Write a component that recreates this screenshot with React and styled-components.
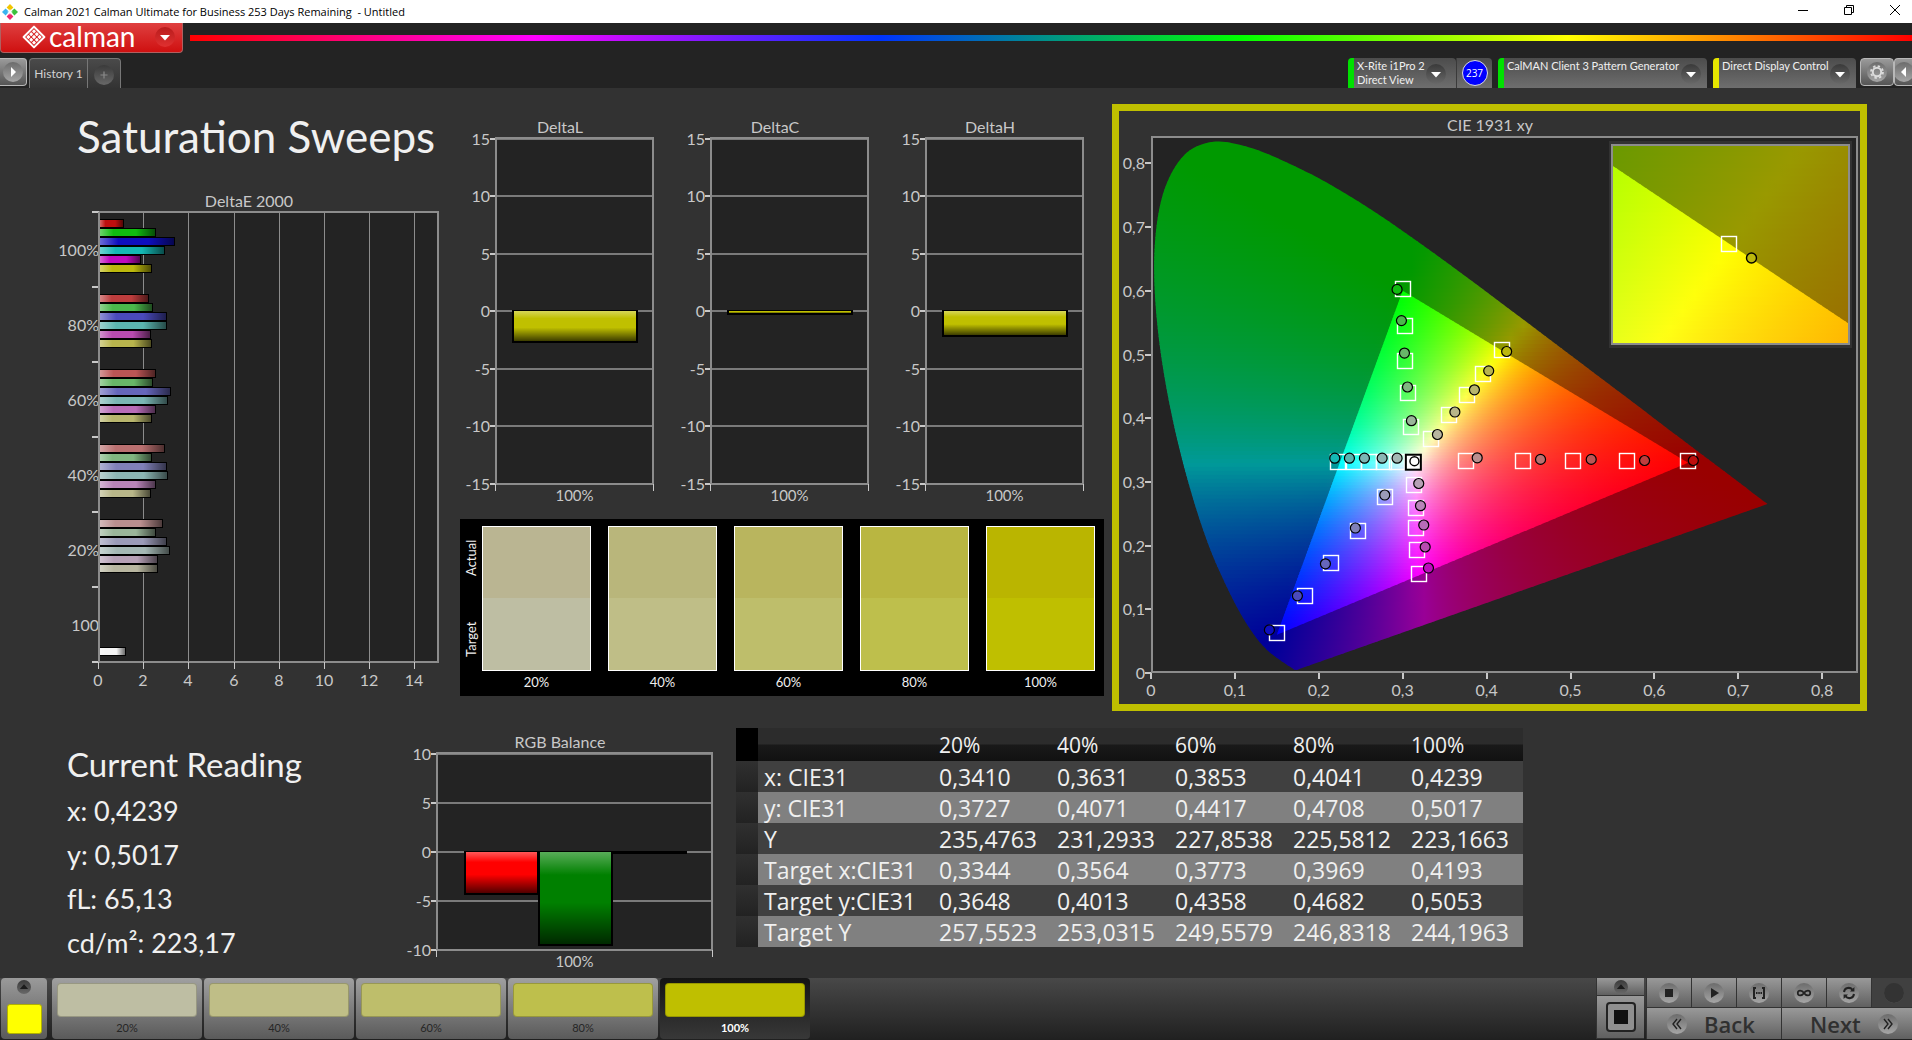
import React from 'react'
import styled, { createGlobalStyle } from 'styled-components'

const GlobalStyle = createGlobalStyle`
  * { box-sizing: border-box; }
  body {
    margin: 0;
    background: #323232;
    font-family: Lato, "Open Sans", sans-serif;
    color: #f0f0f0;
  }
  button { font-family: inherit; color: inherit; padding: 0; margin: 0; border: 0; cursor: pointer; }
  h1, h2, p { margin: 0; font-weight: normal; }
  svg { display: block; flex-shrink: 0; }
  svg text { font-family: Lato, "Open Sans", sans-serif; }
`

/* ---------- data ---------- */

const levels = ['20%', '40%', '60%', '80%', '100%']

const swatches = [
  { actual: '#bab592', target: '#bebea3' },
  { actual: '#b9b67b', target: '#bfbe87' },
  { actual: '#b9b55e', target: '#bebe6b' },
  { actual: '#b9b641', target: '#bebf4c' },
  { actual: '#bab500', target: '#bfbf00' },
]

const readings = ['x: 0,4239', 'y: 0,5017', 'fL: 65,13', 'cd/m²: 223,17']

const tableRows = [
  ['x: CIE31', '0,3410', '0,3631', '0,3853', '0,4041', '0,4239'],
  ['y: CIE31', '0,3727', '0,4071', '0,4417', '0,4708', '0,5017'],
  ['Y', '235,4763', '231,2933', '227,8538', '225,5812', '223,1663'],
  ['Target x:CIE31', '0,3344', '0,3564', '0,3773', '0,3969', '0,4193'],
  ['Target y:CIE31', '0,3648', '0,4013', '0,4358', '0,4682', '0,5053'],
  ['Target Y', '257,5523', '253,0315', '249,5579', '246,8318', '244,1963'],
]

const sweeps = [
  { label: '100%', colors: ['#be0e0e', '#10bb10', '#0e0ebe', '#14b8b4', '#be0abe', '#bcb80c'], values: [1.1, 2.54, 3.35, 2.9, 1.86, 2.36] },
  { label: '80%', colors: ['#bd3d3d', '#4bb84b', '#4a4abb', '#5bb5b0', '#b84bb0', '#b8b44d'], values: [2.2, 2.4, 3.03, 3.03, 2.28, 2.36] },
  { label: '60%', colors: ['#bb5555', '#68b668', '#6666bb', '#7ab6b4', '#b86cb8', '#b8b56d'], values: [2.5, 2.4, 3.2, 3.07, 2.54, 2.36] },
  { label: '40%', colors: ['#ba7070', '#80b680', '#8080b8', '#8cb6b4', '#b984b9', '#b8b689'], values: [2.94, 2.36, 3.03, 3.07, 2.5, 2.28] },
  { label: '20%', colors: ['#ba8f8f', '#9ab59a', '#9b9bb8', '#a4b8b4', '#b6a0b6', '#b8b6a0'], values: [2.82, 2.54, 3.03, 3.16, 2.63, 2.63] },
]

const locus = [
  [0.1741, 0.005], [0.1714, 0.0051], [0.1689, 0.0069], [0.1644, 0.0109], [0.1566, 0.0177], [0.144, 0.0297],
  [0.1355, 0.0399], [0.1241, 0.0578], [0.1096, 0.0868], [0.0913, 0.1327], [0.0687, 0.2007], [0.0454, 0.295],
  [0.0235, 0.4127], [0.0082, 0.5384], [0.0039, 0.6548], [0.0139, 0.7502], [0.0389, 0.812], [0.0743, 0.8338],
  [0.1142, 0.8262], [0.1547, 0.8059], [0.1929, 0.7816], [0.2296, 0.7543], [0.2658, 0.7243], [0.3016, 0.6923],
  [0.3373, 0.6589], [0.3731, 0.6245], [0.4087, 0.5896], [0.4441, 0.5547], [0.4788, 0.5202], [0.5125, 0.4866],
  [0.5448, 0.4544], [0.5752, 0.4242], [0.6029, 0.3965], [0.627, 0.3725], [0.6482, 0.3514], [0.6658, 0.334],
  [0.6801, 0.3197], [0.7006, 0.2993], [0.714, 0.2859], [0.726, 0.274], [0.7347, 0.2653],
]

const gamut = [[0.64, 0.33], [0.3, 0.6], [0.15, 0.06]]

// one entry per hue, 100% first
const targets = [
  [[0.6396, 0.3328], [0.5668, 0.3328], [0.5028, 0.3328], [0.4428, 0.3328], [0.376, 0.3328]],
  [[0.3, 0.6022], [0.3025, 0.545], [0.3033, 0.4905], [0.3069, 0.44], [0.3093, 0.386]],
  [[0.15, 0.0628], [0.1837, 0.1212], [0.215, 0.172], [0.2469, 0.2229], [0.2786, 0.2763]],
  [[0.2234, 0.3309], [0.242, 0.3309], [0.2595, 0.3309], [0.2779, 0.3309], [0.2934, 0.3309]],
  [[0.3191, 0.1559], [0.3176, 0.1931], [0.3156, 0.2279], [0.3156, 0.2583], [0.314, 0.2956]],
  [[0.4183, 0.5068], [0.3955, 0.4694], [0.3763, 0.4371], [0.3549, 0.4045], [0.3342, 0.3675]],
]

const measured = [
  [[0.6464, 0.3336], [0.5883, 0.3336], [0.5247, 0.3353], [0.4643, 0.3353], [0.3888, 0.3378]],
  [[0.2933, 0.6022], [0.2985, 0.5532], [0.3021, 0.5023], [0.3057, 0.449], [0.3104, 0.3961]],
  [[0.1411, 0.0677], [0.1745, 0.1212], [0.2079, 0.1714], [0.2436, 0.2276], [0.2786, 0.2794]],
  [[0.219, 0.3372], [0.2365, 0.3372], [0.2544, 0.3372], [0.2755, 0.3372], [0.2933, 0.3372]],
  [[0.3307, 0.1648], [0.3268, 0.1978], [0.3251, 0.2323], [0.3212, 0.2626], [0.3191, 0.2975]],
  [[0.4239, 0.5047], [0.4025, 0.4743], [0.3855, 0.4446], [0.3622, 0.4097], [0.3414, 0.3744]],
]

/* ---------- charts ---------- */

const GRID = '#8c8c8c'
const TEXT = '#c8c8c8'

function DeltaEChart() {
  const left = 49, right = 388, top = 22, bottom = 472
  const sx = v => Math.round(left - 1 + v * 22.6)
  const group = (bottom - top) / 6
  const bar = (key, x, y, w, fill) => (
    <g key={key}>
      <rect x={x} y={y} width={w} height="8" fill={fill} stroke="#000" />
      <rect x={x} y={y} width={w} height="8" fill="url(#barShade)" stroke="#000" />
    </g>
  )
  return (
    <svg width="400" height="505" viewBox="0 0 400 505" role="img" aria-label="DeltaE 2000">
      <defs>
        <linearGradient id="barShade">
          <stop offset="0" stopColor="#fff" stopOpacity=".4" />
          <stop offset=".25" stopColor="#fff" stopOpacity="0" />
          <stop offset=".65" stopColor="#000" stopOpacity="0" />
          <stop offset="1" stopColor="#000" stopOpacity=".6" />
        </linearGradient>
      </defs>
      <text x="199" y="17" fontSize="16" fill={TEXT} textAnchor="middle">DeltaE 2000</text>
      <rect x={left} y={top} width={right - left} height={bottom - top} fill="#232323" stroke={GRID} strokeWidth="2" />
      {[0, 2, 4, 6, 8, 10, 12, 14].map(v => (
        <g key={v}>
          <rect x={sx(v)} y={top} width="1" height={bottom - top} fill={GRID} />
          <rect x={sx(v)} y={bottom} width="1" height="7" fill={TEXT} />
          <text x={sx(v)} y="496" fontSize="16" fill={TEXT} textAnchor="middle">{v}</text>
        </g>
      ))}
      {[0, 1, 2, 3, 4, 5, 6].map(i => (
        <rect key={i} x={left - 7} y={Math.round(top + i * group) - 1} width="7" height="2" fill={TEXT} />
      ))}
      {sweeps.map((s, i) => (
        <g key={s.label}>
          {s.values.map((v, j) => bar(j, left + 0.5, Math.round(top + 7 + i * group + j * 9) + 0.5, Math.round(v * 22.6) - 1, s.colors[j]))}
          <text x="49" y={top + 44 + i * group} fontSize="16" fill={TEXT} textAnchor="end">{s.label}</text>
        </g>
      ))}
      {bar('white', left + 0.5, 457.5, 26, '#f4f4f4')}
      <text x="49" y="441" fontSize="16" fill={TEXT} textAnchor="end">100</text>
      <rect x={left - 1} y={top} width="2" height={bottom - top} fill={GRID} />
    </svg>
  )
}

function LevelChart({ title, width, height, plot, titleX, max, step, bars }) {
  const { left, right, top, bottom } = plot
  const sy = v => Math.floor(top + 1 + ((max - v) / (2 * max)) * (bottom - top - 1))
  const ticks = []
  for (let v = max; v >= -max; v -= step) ticks.push(v)
  return (
    <svg width={width} height={height} viewBox={`0 0 ${width} ${height}`} role="img" aria-label={title}>
      <defs>
        <linearGradient id="columnShade" x1="0" y1="0" x2="0" y2="1">
          <stop offset="0" stopColor="#fff" stopOpacity=".35" />
          <stop offset=".25" stopColor="#fff" stopOpacity="0" />
          <stop offset=".55" stopColor="#000" stopOpacity="0" />
          <stop offset="1" stopColor="#000" stopOpacity=".68" />
        </linearGradient>
      </defs>
      <text x={titleX} y={top - 5} fontSize="16" fill={TEXT} textAnchor="middle">{title}</text>
      <rect x={left} y={top} width={right - left} height={bottom - top} fill="#232323" />
      {ticks.map(v => (
        <g key={v}>
          <rect x={left} y={sy(v) - 1} width={right - left} height="2" fill="#7a7a7a" />
          <rect x={left - 6} y={sy(v) - 1} width="6" height="2" fill={TEXT} />
          <text x={left - 6} y={sy(v) + 6} fontSize="16" fill={TEXT} textAnchor="end">{v}</text>
        </g>
      ))}
      <rect x={left} y={top} width={right - left} height={bottom - top} fill="none" stroke={GRID} strokeWidth="2" />
      <rect x={left - 1} y={bottom} width="1" height="7" fill={TEXT} />
      <rect x={right} y={bottom} width="1" height="7" fill={TEXT} />
      {bars.map(b => (
        <g key={b.x}>
          <rect x={b.x} y={sy(0)} width={b.width} height={b.height} fill={b.fill} stroke="#000" strokeWidth="2" />
          <rect x={b.x + 1} y={sy(0)} width={b.width - 2} height={Math.max(0, b.height - 1)} fill={b.fill} />
          <rect x={b.x + 1} y={sy(0)} width={b.width - 2} height={Math.max(0, b.height - 1)} fill="url(#columnShade)" />
        </g>
      ))}
      <text x={(left + right) / 2} y={bottom + 17} fontSize="15" fill={TEXT} textAnchor="middle">100%</text>
    </svg>
  )
}

// linear RGB of a chromaticity, scaled so the largest channel is full
function chroma(x, y, k) {
  const z = 1 - x - y
  const rgb = [
    3.2406 * x - 1.5372 * y - 0.4986 * z,
    -0.9689 * x + 1.8758 * y + 0.0415 * z,
    0.0557 * x - 0.204 * y + 1.057 * z,
  ].map(c => Math.max(0, c))
  const m = Math.max(...rgb)
  return `rgb(${rgb.map(c => Math.round((c / m) * 255 * k)).join(',')})`
}

// smooth curve through the points, closed by a straight line
function curve(p) {
  let d = `M${p[0][0]} ${p[0][1]}`
  for (let i = 0; i < p.length - 1; i++) {
    const a = p[i - 1] || p[i], b = p[i], c = p[i + 1], e = p[i + 2] || c
    d += `C${b[0] + (c[0] - a[0]) / 6} ${b[1] + (c[1] - a[1]) / 6} ${c[0] - (e[0] - b[0]) / 6} ${c[1] - (e[1] - b[1]) / 6} ${c[0]} ${c[1]}`
  }
  return d + 'Z'
}

// fills an area with horizontal strips, each one a gradient across x
function ChromaField({ id, x0, x1, y0, y1, sx, sy, rows, stops, k }) {
  const strips = []
  const px = sx(x0), w = sx(x1) - sx(x0)
  const top = sy(y1), h = (sy(y0) - sy(y1)) / rows
  for (let r = 0; r < rows; r++) {
    const y = y1 - ((r + 0.5) / rows) * (y1 - y0)
    const colors = []
    for (let s = 0; s <= stops; s++) {
      colors.push(<stop key={s} offset={s / stops} stopColor={chroma(x0 + (s / stops) * (x1 - x0), y, k)} />)
    }
    strips.push(
      <g key={r}>
        <linearGradient id={`${id}${r}`}>{colors}</linearGradient>
        <rect x={px} y={top + r * h} width={w} height={h + 1} fill={`url(#${id}${r})`} />
      </g>
    )
  }
  return <>{strips}</>
}

function CieChart() {
  const left = 33, right = 738, top = 26, bottom = 561
  const sx = v => left - 1 + v * 839
  const sy = v => bottom + 1 - v * 637
  // magnified view around the selected target
  const zoom = { x: 492, y: 33, w: 239, h: 201 }
  const zx = v => zoom.x + zoom.w / 2 + (v - 0.4193) * (zoom.w / 0.05)
  const zy = v => zoom.y + zoom.h / 2 - (v - 0.5053) * (zoom.h / 0.05)
  const axis = [0, 1, 2, 3, 4, 5, 6, 7, 8]
  const name = i => (i === 0 ? '0' : `0,${i}`)
  return (
    <CieSvg viewBox="0 0 741 593" role="img" aria-label="CIE 1931 xy">
      <defs>
        <clipPath id="locus"><path d={curve(locus.map(([x, y]) => [sx(x), sy(y)]))} /></clipPath>
        <clipPath id="gamut"><polygon points={gamut.map(([x, y]) => `${sx(x)},${sy(y)}`).join(' ')} /></clipPath>
        <clipPath id="zoomBox"><rect x={zoom.x} y={zoom.y} width={zoom.w} height={zoom.h} /></clipPath>
        <clipPath id="zoomGamut">
          <polygon points={gamut.map(([x, y]) => `${zx(x)},${zy(y)}`).join(' ')} />
        </clipPath>
      </defs>
      <text x="371" y="20" fontSize="16" fill={TEXT} textAnchor="middle">CIE 1931 xy</text>
      <rect x={left} y={top} width={right - left} height={bottom - top} fill="#232323" stroke={GRID} strokeWidth="2" />
      <g clipPath="url(#locus)">
        <ChromaField id="o" x0={0} x1={0.74} y0={0} y1={0.84} sx={sx} sy={sy} rows={135} stops={50} k={0.6} />
      </g>
      <g clipPath="url(#gamut)">
        <ChromaField id="i" x0={0.15} x1={0.64} y0={0.06} y1={0.6} sx={sx} sy={sy} rows={115} stops={50} k={1} />
      </g>
      {axis.map(i => (
        <g key={i}>
          <rect x={Math.round(sx(i / 10)) - 1} y={bottom + 1} width="2" height="6" fill={TEXT} />
          <text x={sx(i / 10)} y="585" fontSize="16" fill={TEXT} textAnchor="middle">{name(i)}</text>
          <rect x={left - 7} y={Math.round(sy(i / 10)) - 1} width="6" height="2" fill={TEXT} />
          <text x={left - 7} y={sy(i / 10) + 6} fontSize="16" fill={TEXT} textAnchor="end">{name(i)}</text>
        </g>
      ))}
      {targets.flat().map(([x, y], i) => (
        <rect key={i} x={Math.round(sx(x)) - 7.5} y={Math.round(sy(y)) - 7.5} width="15" height="15" fill="none" stroke="#fff" strokeWidth="1.4" />
      ))}
      {measured.map((hue, h) => hue.map(([x, y], i) => (
        <circle key={`${h}-${i}`} cx={sx(x)} cy={sy(y)} r="5" fill={sweeps[i].colors[h]} stroke="#000" strokeWidth="1.2" />
      )))}
      <rect x={sx(0.3127) - 7.5} y={sy(0.3309) - 7.5} width="15" height="15" fill="#fff" stroke="#000" strokeWidth="2" />
      <circle cx={sx(0.314)} cy={sy(0.3325)} r="4.5" fill="#fff" stroke="#000" strokeWidth="1.4" />

      <rect x={zoom.x - 2} y={zoom.y - 3} width={zoom.w + 4} height={zoom.h + 6} fill="#323232" />
      <g clipPath="url(#zoomBox)">
        <ChromaField id="zo" x0={0.3943} x1={0.4443} y0={0.4803} y1={0.5303} sx={zx} sy={zy} rows={50} stops={20} k={0.6} />
        <g clipPath="url(#zoomGamut)">
          <ChromaField id="zi" x0={0.3943} x1={0.4443} y0={0.4803} y1={0.5303} sx={zx} sy={zy} rows={50} stops={20} k={1} />
        </g>
      </g>
      <rect x={zoom.x + 1} y={zoom.y + 1} width={zoom.w - 2} height={zoom.h - 2} fill="none" stroke={GRID} strokeWidth="2" />
      <rect x={zx(0.4193) - 9} y={zy(0.5053) - 8} width="15" height="15" fill="none" stroke="#fff" strokeWidth="1.4" />
      <circle cx={zx(0.4239) - 1} cy={zy(0.5017) - 1} r="5" fill="#bcb80c" stroke="#000" strokeWidth="1.4" />
    </CieSvg>
  )
}

/* ---------- icons ---------- */

// round dimple that most of the controls carry, with a glyph in the middle
function Dimple({ size = 20, tone = 'light', children }) {
  const fill = { light: 'url(#dimpleLight)', dark: 'url(#dimpleDark)', red: 'url(#dimpleRed)' }[tone]
  return (
    <svg width={size} height={size} viewBox="0 0 20 20" aria-hidden="true">
      <defs>
        <linearGradient id="dimpleLight" x1="0" y1="0" x2="0" y2="1">
          <stop offset="0" stopColor="#6c6c6c" /><stop offset="1" stopColor="#a6a6a6" />
        </linearGradient>
        <linearGradient id="dimpleDark" x1="0" y1="0" x2="0" y2="1">
          <stop offset="0" stopColor="#3a3a3a" /><stop offset="1" stopColor="#686868" />
        </linearGradient>
        <linearGradient id="dimpleRed" x1="0" y1="0" x2="0" y2="1">
          <stop offset="0" stopColor="#b81c1c" /><stop offset="1" stopColor="#e03030" />
        </linearGradient>
      </defs>
      <circle cx="10" cy="10" r="10" fill={fill} />
      {children}
    </svg>
  )
}

const Down = () => <path d="M5 8h10l-5 5.5z" fill="#fff" />
const Up = () => <path d="M4 13h12l-6-7z" fill="#1c1c1c" />

const AppIcon = () => (
  <svg width="16" height="16" viewBox="0 0 16 16" aria-hidden="true">
    <path d="M8 0l3.4 3.4L8 6.8 4.6 3.4z" fill="#f2c500" />
    <path d="M3.6 4.4L7 7.8l-3.4 3.6L0 8z" fill="#3bb4f0" />
    <path d="M12.4 4.4L16 8l-3.6 3.4L9 7.8z" fill="#3cc13c" />
    <path d="M8 8.9l3.4 3.5L8 16l-3.4-3.6z" fill="#f0286e" />
    <path d="M8 5l2.8 3L8 11 5.2 8z" fill="#fff" opacity=".5" />
  </svg>
)

const LogoMark = () => (
  <svg width="24" height="24" viewBox="0 0 24 24" aria-hidden="true">
    <path d="M12 1.6L22.4 12 12 22.4 1.6 12z" fill="none" stroke="#fff" strokeWidth="2" strokeLinejoin="round" />
    {[[12, 6.4], [9.2, 9.2], [14.8, 9.2], [6.4, 12], [12, 12], [17.6, 12], [9.2, 14.8], [14.8, 14.8], [12, 17.6]].map(([x, y]) => (
      <rect key={`${x}-${y}`} x={x - 1.5} y={y - 1.5} width="3" height="3" rx=".6" fill="#fff" transform={`rotate(45 ${x} ${y})`} />
    ))}
  </svg>
)

const Gear = () => (
  <g fill="none" stroke="#dcdcdc">
    <circle cx="10" cy="10" r="4.2" strokeWidth="2" />
    <circle cx="10" cy="10" r="6" strokeWidth="1.8" strokeDasharray="2.4 2.31" />
  </g>
)

/* ---------- page ---------- */

export default function App() {
  return (
    <>
      <GlobalStyle />
      <Page>
        <TitleBar>
          <AppIcon />
          <TitleText>Calman 2021 Calman Ultimate for Business 253 Days Remaining&nbsp; - Untitled</TitleText>
          <WindowButton aria-label="Minimize">
            <svg width="12" height="12" viewBox="0 0 12 12"><path d="M1 6.5h10" stroke="#000" /></svg>
          </WindowButton>
          <WindowButton aria-label="Restore">
            <svg width="12" height="12" viewBox="0 0 12 12"><path d="M1.5 3.5h7v7h-7zM3.5 3.5v-2h7v7h-2" fill="none" stroke="#000" /></svg>
          </WindowButton>
          <WindowButton aria-label="Close">
            <svg width="12" height="12" viewBox="0 0 12 12"><path d="M1 1l10 10M11 1L1 11" stroke="#000" /></svg>
          </WindowButton>
        </TitleBar>

        <Header>
          <LogoButton>
            <LogoMark />
            <LogoText>calman</LogoText>
            <Dimple tone="red"><Down /></Dimple>
          </LogoButton>
          <Spectrum />
        </Header>

        <TabRow>
          <SquareButton $side="left" aria-label="Show panel">
            <Dimple><path d="M8 5l5 5-5 5z" fill="#fff" /></Dimple>
          </SquareButton>
          <HistoryTab>History 1</HistoryTab>
          <AddTab aria-label="Add tab">
            <Dimple tone="dark"><path d="M10 6.5v7M6.5 10h7" stroke="#8a8a8a" strokeWidth="1.2" /></Dimple>
          </AddTab>
          <Spacer />
          <DeviceTab $bar="#00e000" $width="108px" $pad="10px">
            <DeviceName>X-Rite i1Pro 2<br />Direct View</DeviceName>
            <Dimple tone="dark"><Down /></Dimple>
          </DeviceTab>
          <CountTab aria-label="Readings"><Count>237</Count></CountTab>
          <DeviceTab $bar="#00e000" $width="209px" $gap="6px">
            <DeviceName>CalMAN Client 3 Pattern Generator</DeviceName>
            <Dimple tone="dark"><Down /></Dimple>
          </DeviceTab>
          <DeviceTab $bar="#e6e600" $width="143px" $gap="6px">
            <DeviceName>Direct Display Control</DeviceName>
            <Dimple tone="dark"><Down /></Dimple>
          </DeviceTab>
          <SquareButton $wide aria-label="Settings"><Dimple><Gear /></Dimple></SquareButton>
          <SquareButton $side="right" aria-label="Collapse">
            <Dimple><path d="M12 5l-5 5 5 5z" fill="#fff" /></Dimple>
          </SquareButton>
        </TabRow>

        <Content>
          <TopRow>
            <SweepColumn>
              <PageTitle>Saturation Sweeps</PageTitle>
              <DeltaEChart />
            </SweepColumn>
            <MiddleColumn>
              <DeltaRow>
                {[['DeltaL', 31], ['DeltaC', 3], ['DeltaH', 25]].map(([title, h]) => (
                  <LevelChart
                    key={title}
                    title={title}
                    width={215}
                    height={400}
                    plot={{ left: 36, right: 193, top: 28, bottom: 374 }}
                    titleX={100}
                    max={15}
                    step={5}
                    bars={[{ x: 53, width: 124, height: h, fill: '#c0c000' }]}
                  />
                ))}
              </DeltaRow>
              <SwatchPanel>
                <SwatchSide><span>Target</span><span>Actual</span></SwatchSide>
                {swatches.map((s, i) => (
                  <SwatchItem key={levels[i]}>
                    <SwatchBox $actual={s.actual} $target={s.target} />
                    {levels[i]}
                  </SwatchItem>
                ))}
              </SwatchPanel>
            </MiddleColumn>
            <CiePanel><CieChart /></CiePanel>
          </TopRow>

          <BottomRow>
            <Reading>
              <h2>Current Reading</h2>
              {readings.map(r => <p key={r}>{r}</p>)}
            </Reading>
            <LevelChart
              title="RGB Balance"
              width={336}
              height={250}
              plot={{ left: 37, right: 312, top: 25, bottom: 222 }}
              titleX={160}
              max={10}
              step={5}
              bars={[
                { x: 65, width: 73, height: 42, fill: '#ff0000' },
                { x: 139, width: 73, height: 93, fill: '#008000' },
                { x: 213, width: 73, height: 1, fill: '#000' },
              ]}
            />
            <DataTable>
              <thead>
                <tr>
                  <Marker as="td" />
                  <td />
                  {levels.map(l => <th key={l} scope="col">{l}</th>)}
                </tr>
              </thead>
              <tbody>
                {tableRows.map(([name, ...cells]) => (
                  <tr key={name}>
                    <Marker />
                    <th scope="row">{name}</th>
                    {cells.map(c => <td key={c}>{c}</td>)}
                  </tr>
                ))}
              </tbody>
            </DataTable>
          </BottomRow>
        </Content>

        <Footer>
          <ColorButton aria-label="Pattern color">
            <Dimple size={14} tone="dark"><Up /></Dimple>
            <ColorChip />
          </ColorButton>
          {levels.map((l, i) => (
            <LevelButton key={l} $active={i === 4}>
              <LevelSwatch $color={swatches[i].target} />
              {l}
            </LevelButton>
          ))}
          <Spacer />
          <StopColumn>
            <PanelButton $height="18px" aria-label="Expand">
              <Dimple size={14} tone="dark"><Up /></Dimple>
            </PanelButton>
            <PanelButton $height="43px" aria-label="Pattern">
              <svg width="32" height="32" viewBox="0 0 32 32">
                <rect x="2" y="2" width="28" height="28" rx="3" fill="#8f8f8f" stroke="#222" strokeWidth="2" />
                <rect x="9" y="9" width="14" height="14" fill="#111" />
              </svg>
            </PanelButton>
          </StopColumn>
          <Transport>
            <PanelButton $height="30px" aria-label="Stop">
              <Dimple><path d="M6 6h8v8H6z" fill="#222" /></Dimple>
            </PanelButton>
            <PanelButton $height="30px" aria-label="Play">
              <Dimple><path d="M7 5l8 5-8 5z" fill="#222" /></Dimple>
            </PanelButton>
            <PanelButton $height="30px" aria-label="Read series">
              <Dimple>
                <path d="M7 5H5v10h2M13 5h2v10h-2" fill="none" stroke="#222" strokeWidth="2" />
                <path d="M7 10h1.500M9.300 10h1.500M11.500 10H13" stroke="#222" strokeWidth="2" />
              </Dimple>
            </PanelButton>
            <PanelButton $height="30px" aria-label="Read continuously">
              <Dimple>
                <path d="M10 10C8 7 3.800 6.600 3.800 10S8 13 10 10c2-3 6.200-3.400 6.200 0S12 13 10 10z" fill="none" stroke="#222" strokeWidth="1.800" />
              </Dimple>
            </PanelButton>
            <PanelButton $height="30px" aria-label="Refresh">
              <Dimple>
                <path d="M5 9c.6-4.600 6-5.200 8.400-2.400M15 11c-.6 4.600-6 5.200-8.400 2.400" fill="none" stroke="#222" strokeWidth="2" />
                <path d="M15.400 4v4.600H11zM4.600 16v-4.600H9z" fill="#222" />
              </Dimple>
            </PanelButton>
            <PanelButton $height="30px" $off disabled aria-label="Record">
              <Dimple tone="dark"><circle cx="10" cy="10" r="10" fill="#333" /></Dimple>
            </PanelButton>
            <StepButton $pad="20px">
              <Dimple><path d="M10 5l-4 5 4 5M14 5l-4 5 4 5" fill="none" stroke="#222" strokeWidth="1.400" /></Dimple>
              Back
            </StepButton>
            <StepButton $pad="28px">
              Next
              <Dimple><path d="M6 5l4 5-4 5M10 5l4 5-4 5" fill="none" stroke="#222" strokeWidth="1.400" /></Dimple>
            </StepButton>
          </Transport>
        </Footer>
      </Page>
    </>
  )
}

const Page = styled.div`
  min-height: 100vh;
  display: flex;
  flex-direction: column;
`

const TitleBar = styled.div`
  display: flex;
  align-items: center;
  height: 23px;
  padding-left: 2px;
  background: #fff;
  color: #000;
`
const TitleText = styled.span`
  flex: 1;
  margin-left: 6px;
  font: 11px "Open Sans", "Noto Sans", sans-serif;
`
const WindowButton = styled.button`
  display: flex;
  align-items: center;
  justify-content: center;
  width: 46px;
  height: 20px;
  align-self: flex-start;
  background: #fff;
  &:last-child { width: 34px; margin-left: 6px; }
`

const Header = styled.header`
  display: flex;
  gap: 7px;
  height: 35px;
  background: #232323;
`
const LogoButton = styled.button`
  display: flex;
  align-items: center;
  width: 183px;
  height: 30px;
  padding: 0 7px 2px 21px;
  background: linear-gradient(#df4040, #cf1010);
  border: 1px solid #b06060;
  border-top: 0;
  border-radius: 0 0 4px 4px;
`
const LogoText = styled.span`
  flex: 1;
  margin-left: 3px;
  padding-bottom: 2px;
  text-align: left;
  font-size: 28px;
  line-height: 26px;
  color: #fff;
`
const Spectrum = styled.div`
  flex: 1;
  height: 6px;
  margin-top: 12px;
  background: linear-gradient(90deg, #f00, #f0f 20%, #0032ff 40%, #0f0 61%, #ff0 80%, #f00);
`

const TabRow = styled.nav`
  display: flex;
  height: 30px;
  background: #232323;
`
const Spacer = styled.div`
  flex: 1;
`
const SquareButton = styled.button`
  display: flex;
  align-items: center;
  justify-content: center;
  width: ${p => (p.$wide ? '34px' : p.$side === 'left' ? '27px' : '18px')};
  height: 28px;
  margin-left: ${p => (p.$wide ? '4px' : '0')};
  overflow: hidden;
  background: linear-gradient(#9a9a9a, #555);
  border: 1px solid #b8b8b8;
  border-left-width: ${p => (p.$side === 'left' ? '0' : '1px')};
  border-right-width: ${p => (p.$side === 'right' ? '0' : '1px')};
  border-radius: ${p => (p.$side === 'left' ? '0 4px 4px 0' : p.$side === 'right' ? '4px 0 0 4px' : '4px')};
`
const HistoryTab = styled.button`
  width: 59px;
  margin-left: 2px;
  font-size: 12px;
  color: #d2d2d2;
  background: linear-gradient(#4a4a4a, #333);
  border: 1px solid #777;
  border-bottom: 0;
  border-radius: 4px 0 0 0;
`
const AddTab = styled.button`
  display: flex;
  align-items: center;
  justify-content: center;
  width: 33px;
  padding-top: 2px;
  background: linear-gradient(#4a4a4a, #333);
  border: 1px solid #777;
  border-width: 1px 1px 0 0;
  border-radius: 0 4px 0 0;
`
const DeviceTab = styled.button`
  display: flex;
  justify-content: space-between;
  width: ${p => p.$width};
  margin-left: ${p => p.$gap || '0'};
  padding: 0 ${p => p.$pad || '6px'} 0 3px;
  background: linear-gradient(#4c4c4c, #6e6e6e);
  border-left: 6px solid ${p => p.$bar};
  border-radius: 4px 4px 0 0;
  svg { margin-top: 6px; }
`
const DeviceName = styled.span`
  padding-top: 1px;
  text-align: left;
  white-space: nowrap;
  font-size: 11px;
  line-height: 14px;
`
const CountTab = styled.button`
  display: flex;
  align-items: center;
  justify-content: center;
  width: 36px;
  background: linear-gradient(#4c4c4c, #6e6e6e);
  border-left: 1px solid #3a3a3a;
  border-radius: 0 4px 0 0;
`
const Count = styled.span`
  width: 26px;
  height: 26px;
  border: 1px solid #ddd;
  border-radius: 50%;
  background: #00f;
  color: #fff;
  font: 10px "Open Sans", sans-serif;
  line-height: 24px;
`

const Content = styled.main`
  flex: 1;
  background: #323232;
`
const TopRow = styled.section`
  display: grid;
  grid-template-columns: 460px 645px 1fr;
  padding: 16px 45px 0 0;
`
const SweepColumn = styled.div`
  padding-left: 50px;
`
const PageTitle = styled.h1`
  height: 86px;
  padding: 4px 0 0 27px;
  font-size: 44px;
  line-height: 56px;
`
const MiddleColumn = styled.div`
  padding-top: 6px;
`
const DeltaRow = styled.div`
  display: flex;
`
const SwatchPanel = styled.div`
  display: flex;
  gap: 17px;
  width: 644px;
  height: 177px;
  margin-top: 9px;
  padding: 7px 9px 0 0;
  background: #000;
`
const SwatchSide = styled.div`
  display: flex;
  justify-content: space-between;
  width: 22px;
  height: 145px;
  margin-right: -17px;
  padding: 14px 0;
  writing-mode: vertical-rl;
  transform: rotate(180deg);
  font-size: 13px;
  line-height: 22px;
`
const SwatchItem = styled.div`
  flex: 1;
  font-size: 13px;
  line-height: 22px;
  text-align: center;
`
const SwatchBox = styled.div`
  height: 145px;
  border: 1px solid #fff;
  background: linear-gradient(${p => p.$actual} 50%, ${p => p.$target} 50%);
`
const CiePanel = styled.div`
  margin-left: 7px;
  border: 7px solid #bfbf00;
  align-self: start;
`
const CieSvg = styled.svg`
  width: 100%;
  height: auto;
`

const BottomRow = styled.section`
  display: flex;
  align-items: flex-start;
  padding-top: 17px;
`
const Reading = styled.div`
  width: 400px;
  padding: 16px 0 0 67px;
  font-size: 27px;
  line-height: 44px;
  h2 {
    font-size: 33px;
    line-height: 40px;
    margin-bottom: 5px;
  }
`
const DataTable = styled.table`
  border-collapse: collapse;
  table-layout: fixed;
  width: 785px;
  font: 23px "Open Sans", sans-serif;
  th, td {
    height: 31px;
    width: 118px;
    padding: 0 0 0 6px;
    text-align: left;
    font-weight: normal;
    line-height: 28px;
    white-space: nowrap;
  }
  thead tr { height: 33px; background: linear-gradient(#2c2c2c 48%, #191919 52%, #111); }
  thead th { font-size: 21px; }
  thead td:nth-child(2) { width: 175px; }
  tbody tr { background: #404040; }
  tbody tr:nth-child(even) { background: #808080; }
`
const Marker = styled.td`
  &&& {
    width: 22px;
    padding: 0;
    background: linear-gradient(#303030, #222);
  }
  thead &&& { background: #000; }
`

const Footer = styled.footer`
  display: flex;
  gap: 2px;
  height: 62px;
  padding: 0 0 1px 1px;
  background: linear-gradient(#484848, #202020);
`
const ColorButton = styled.button`
  display: flex;
  flex-direction: column;
  align-items: center;
  justify-content: space-between;
  width: 46px;
  margin-right: 3px;
  padding: 2px 0 5px;
  background: linear-gradient(#9a9a9a, #5a5a5a);
  border-radius: 4px;
`
const ColorChip = styled.span`
  width: 35px;
  height: 30px;
  background: #ff0;
  border: 1px solid #b0b000;
  border-radius: 3px;
`
const LevelButton = styled.button`
  display: flex;
  flex-direction: column;
  align-items: center;
  width: 150px;
  padding-top: 5px;
  font-size: 11px;
  line-height: 22px;
  font-weight: ${p => (p.$active ? 'bold' : 'normal')};
  color: ${p => (p.$active ? '#fff' : '#262626')};
  background: ${p => (p.$active ? 'linear-gradient(#141414, #383838)' : 'linear-gradient(#a0a0a0, #5a5a5a)')};
  border-radius: 4px;
`
const LevelSwatch = styled.span`
  width: 140px;
  height: 36px;
  background: ${p => p.$color};
  border: 1px solid rgba(0, 0, 0, 0.2);
  border-radius: 4px;
`
const StopColumn = styled.div`
  width: 48px;
`
const PanelButton = styled.button`
  display: flex;
  align-items: center;
  justify-content: center;
  width: 100%;
  height: ${p => p.$height};
  background: ${p => (p.$off ? '#404040' : 'linear-gradient(#999, #606060)')};
  border-left: 1px solid #333;
  border-bottom: 1px solid #333;
`
const Transport = styled.div`
  display: grid;
  grid-template-columns: repeat(6, 45px);
  grid-template-rows: 30px 31px;
  width: 266px;
  overflow: hidden;
`
const StepButton = styled.button`
  grid-column: span 3;
  display: flex;
  align-items: center;
  gap: 17px;
  padding-left: ${p => p.$pad};
  background: linear-gradient(#999, #606060);
  border-left: 1px solid #333;
  font: 600 22px "Open Sans", sans-serif;
  line-height: 30px;
  color: #303030;
`
